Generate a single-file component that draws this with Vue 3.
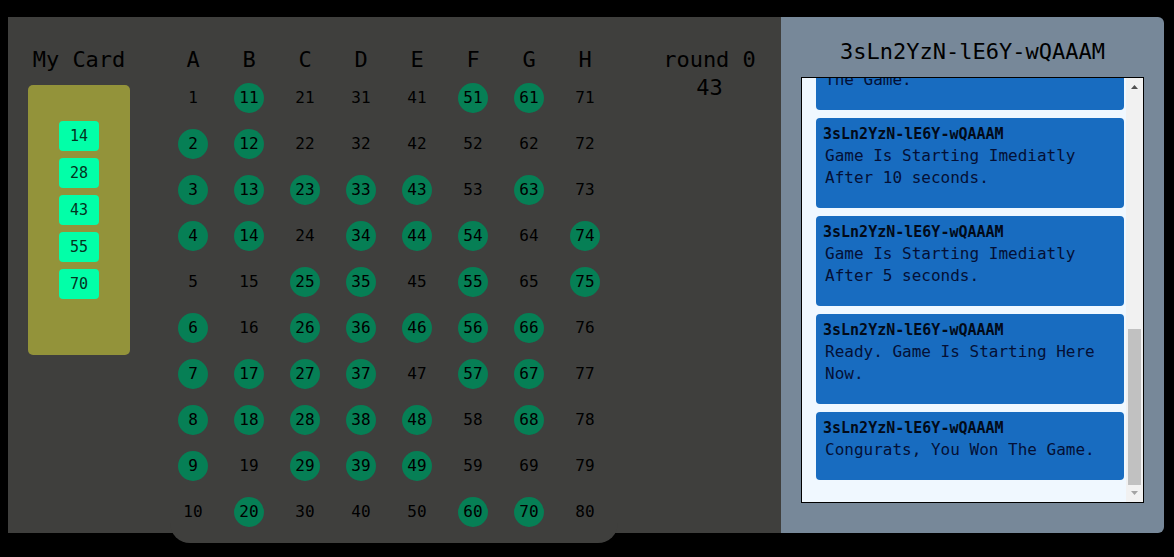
<script setup>
const letters = ['A', 'B', 'C', 'D', 'E', 'F', 'G', 'H']
const card = [14, 28, 43, 55, 70]
const drawn = new Set([
  2, 3, 4, 6, 7, 8, 9,
  11, 12, 13, 14, 17, 18, 20,
  23, 25, 26, 27, 28, 29,
  33, 34, 35, 36, 37, 38, 39,
  43, 44, 46, 48, 49,
  51, 54, 55, 56, 57, 60,
  61, 63, 66, 67, 68, 70,
  74, 75,
])
const player = '3sLn2YzN-lE6Y-wQAAAM'
const messages = [
  { text: 'The Game.' },
  { from: player, text: 'Game Is Starting Imediatly After 10 seconds.' },
  { from: player, text: 'Game Is Starting Imediatly After 5 seconds.' },
  { from: player, text: 'Ready. Game Is Starting Here Now.' },
  { from: player, text: 'Congurats, You Won The Game.' },
]
</script>

<template>
  <main class="page">
    <section class="game">
      <div class="my-card">
        <h2 class="heading">My Card</h2>
        <ul class="slots">
          <li v-for="n in card" :key="n" class="slot">{{ n }}</li>
        </ul>
      </div>
      <div class="board">
        <table>
          <thead>
            <tr>
              <th v-for="l in letters" :key="l" scope="col">{{ l }}</th>
            </tr>
          </thead>
          <tbody>
            <tr v-for="row in 10" :key="row">
              <td v-for="(l, col) in letters" :key="l">
                <span class="ball" :class="{ drawn: drawn.has(col * 10 + row) }">{{ col * 10 + row }}</span>
              </td>
            </tr>
          </tbody>
        </table>
      </div>
      <div class="status">
        <div>round 0</div>
        <div>43</div>
      </div>
    </section>
    <aside class="chat">
      <h2 class="heading">{{ player }}</h2>
      <div class="log">
        <div class="messages">
          <article v-for="m in messages" :key="m.text" class="message">
            <h3 v-if="m.from">{{ m.from }}</h3>
            <p>{{ m.text }}</p>
          </article>
        </div>
        <div class="scrollbar" aria-hidden="true">
          <svg class="arrow" viewBox="0 0 17 17"><path d="M5 11L8.500 7L12 11Z" fill="#505050" /></svg>
          <div class="track"><div class="thumb"></div></div>
          <svg class="arrow" viewBox="0 0 17 17"><path d="M5 6L8.500 10L12 6Z" fill="#a3a3a3" /></svg>
        </div>
      </div>
    </aside>
  </main>
</template>

<style>
body {
  background: #000;
}
</style>

<style scoped>
* {
  box-sizing: border-box;
}

h2,
h3,
p,
ul {
  margin: 0;
  padding: 0;
}

.page {
  display: grid;
  grid-template-columns: 1fr 383px;
  height: 100vh;
  padding: 17px 10px 24px 8px;
  font-family: "DejaVu Sans Mono", "Liberation Mono", monospace;
  color: #000;
}

.heading,
.status,
th {
  font-size: 22px;
  font-weight: 400;
  line-height: 28px;
  text-align: center;
}

.game {
  display: flex;
  align-items: flex-start;
  min-height: 0;
  padding: 29px 0 0 20px;
  background: #3f3f3d;
}

.my-card {
  width: 102px;
}

.slots {
  display: flex;
  flex-direction: column;
  align-items: center;
  gap: 7px;
  min-height: 270px;
  margin-top: 11px;
  padding: 36px 0;
  border-radius: 5px;
  background: #93933a;
  list-style: none;
}

.slot {
  width: 40px;
  border-radius: 4px;
  background: #02ffa8;
  color: #04331f;
  font-size: 15px;
  line-height: 30px;
  text-align: center;
}

.board {
  flex: none;
  margin-left: 40px;
  padding: 0 18px 0 8px;
  border-radius: 0 0 20px 20px;
  background: #3f3f3d;
}

table {
  border-spacing: 0;
}

th {
  min-width: 30px;
  padding: 0 26px 9px 0;
}

td {
  padding: 0 26px 16px 0;
}

th:last-child,
td:last-child {
  padding-right: 0;
}

.ball {
  display: block;
  width: 30px;
  height: 30px;
  border-radius: 50%;
  font-size: 16px;
  line-height: 30px;
  text-align: center;
}

.drawn {
  background: #067f55;
}

.status {
  flex: 1;
  padding-left: 20px;
}

.chat {
  display: flex;
  flex-direction: column;
  min-height: 0;
  padding: 21px 20px 30px;
  border-radius: 0 6px 6px 0;
  background: #778899;
}

.log {
  display: flex;
  flex: 1;
  min-height: 0;
  margin-top: 11px;
  border: 1px solid #000;
  background: aliceblue;
}

.messages {
  display: flex;
  flex: 1;
  flex-direction: column;
  justify-content: flex-end;
  gap: 8px;
  overflow: hidden;
  padding: 0 2px 22px 14px;
}

.message {
  flex: none;
  padding: 5px 7px 19px;
  border-radius: 4px;
  background: #186cc0;
}

.message h3 {
  color: #020a18;
  font-size: 15px;
  font-weight: 700;
  line-height: 22px;
}

.message p {
  padding-left: 2px;
  color: #041036;
  font-size: 16px;
  line-height: 22px;
}

.scrollbar {
  display: flex;
  flex-direction: column;
  width: 17px;
  background: #f1f1f1;
}

.arrow {
  width: 17px;
  height: 17px;
}

.track {
  display: flex;
  flex: 1;
  align-items: flex-end;
  padding: 0 2px;
}

.thumb {
  width: 13px;
  height: 40%;
  background: #c1c1c1;
}
</style>
